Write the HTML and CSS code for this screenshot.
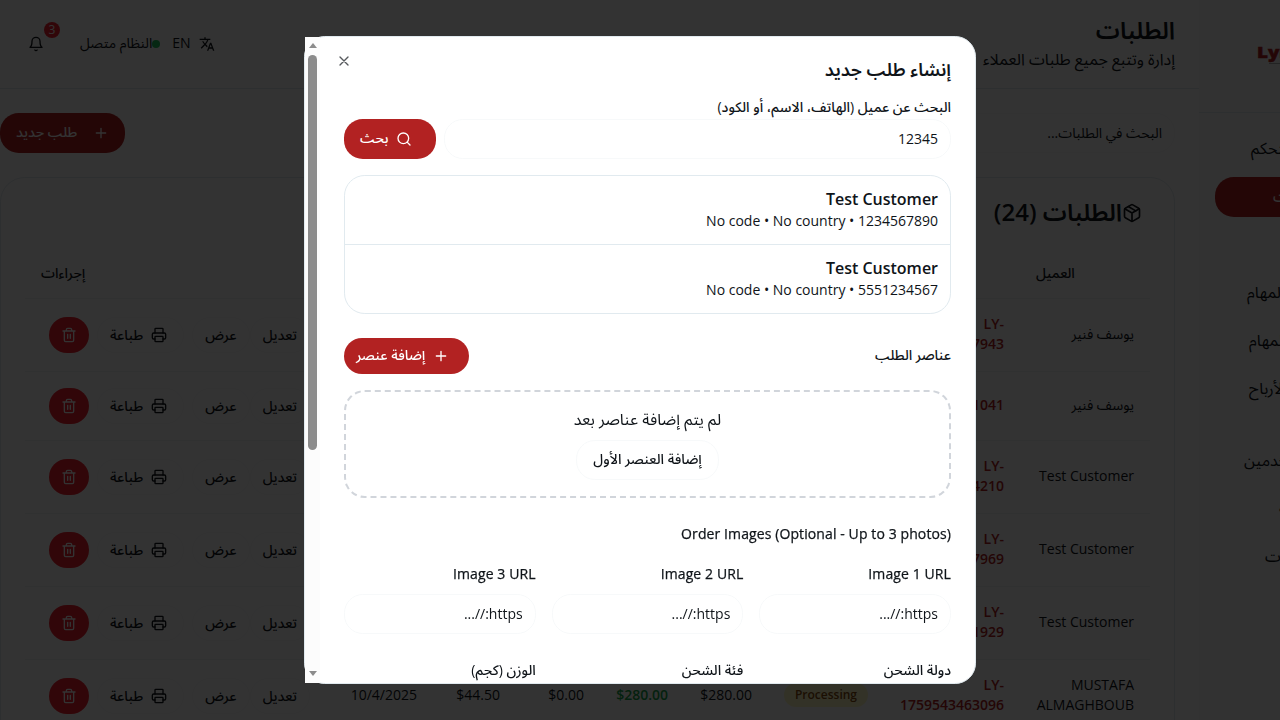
FILE: index.html
```html
<!DOCTYPE html>
<html lang="ar" dir="rtl">
<head>
<meta charset="utf-8">
<title>الطلبات</title>
<link rel="stylesheet" href="styles.css">
</head>
<body>
<svg class="defs" width="0" height="0">
  <symbol id="plus" viewBox="0 0 24 24"><path d="M5 12h14M12 5v14"/></symbol>
  <symbol id="search" viewBox="0 0 24 24"><circle cx="11" cy="11" r="8"/><path d="m21 21-4.3-4.3"/></symbol>
  <symbol id="x" viewBox="0 0 24 24"><path d="M18 6 6 18M6 6l12 12"/></symbol>
  <symbol id="bell" viewBox="0 0 24 24"><path d="M6 8a6 6 0 0 1 12 0c0 7 3 9 3 9H3s3-2 3-9"/><path d="M10.3 21a1.94 1.94 0 0 0 3.4 0"/></symbol>
  <symbol id="box" viewBox="0 0 24 24"><path d="m7.5 4.27 9 5.15"/><path d="M21 8a2 2 0 0 0-1-1.73l-7-4a2 2 0 0 0-2 0l-7 4A2 2 0 0 0 3 8v8a2 2 0 0 0 1 1.73l7 4a2 2 0 0 0 2 0l7-4A2 2 0 0 0 21 16Z"/><path d="m3.3 7 8.7 5 8.7-5M12 22V12"/></symbol>
  <symbol id="printer" viewBox="0 0 24 24"><path d="M6 18H4a2 2 0 0 1-2-2v-5a2 2 0 0 1 2-2h16a2 2 0 0 1 2 2v5a2 2 0 0 1-2 2h-2"/><path d="M6 9V3a1 1 0 0 1 1-1h10a1 1 0 0 1 1 1v6"/><rect x="6" y="14" width="12" height="8" rx="1"/></symbol>
  <symbol id="trash" viewBox="0 0 24 24"><path d="M3 6h18M19 6v14c0 1-1 2-2 2H7c-1 0-2-1-2-2V6M8 6V4c0-1 1-2 2-2h4c1 0 2 1 2 2v2M10 11v6M14 11v6"/></symbol>
  <symbol id="translate" viewBox="0 0 24 24"><path d="m12.87 15.07-2.54-2.51.03-.03A17.52 17.52 0 0 0 14.07 6H17V4h-7V2H8v2H1v1.99h11.17C11.5 7.92 10.44 9.75 9 11.35 8.07 10.32 7.3 9.19 6.69 8h-2c.73 1.63 1.73 3.17 2.98 4.56l-5.09 5.02L4 19l5-5 3.11 3.11.76-2.04zM18.5 10h-2L12 22h2l1.12-3h4.75L21 22h2l-4.5-12zm-2.62 7 1.62-4.33L19.12 17h-3.24z"/></symbol>
</svg>

<div class="app">
  <aside class="sidebar">
    <div class="brand"><span>Lynx</span><i></i></div>
    <nav class="nav">
      <a class="n0">لوحة التحكم</a>
      <a class="active">الطلبات</a>
      <a></a>
      <a class="n1">إدارة المهام</a>
      <a class="n2">المهام</a>
      <a class="n3">تقرير الأرباح</a>
      <a class="n4">المستخدمين</a>
      <a class="n5">المالية</a>
      <a class="n6">الإعدادات</a>
    </nav>
  </aside>

  <main class="main">
    <header class="top">
      <div>
        <h1>الطلبات</h1>
        <p>إدارة وتتبع جميع طلبات العملاء</p>
      </div>
      <div class="tools">
        <span class="lang"><svg class="solid"><use href="#translate"/></svg><span class="txt">EN</span></span>
        <span class="online"><i></i><span class="txt">النظام متصل</span></span>
        <span class="bell"><svg><use href="#bell"/></svg><b>3</b></span>
      </div>
    </header>
    <div class="bar">
      <div class="find">البحث في الطلبات...</div>
      <button class="btn wide"><svg><use href="#plus"/></svg><span class="txt">طلب جديد</span></button>
    </div>
    <section class="card">
      <h2><svg><use href="#box"/></svg><span class="txt">الطلبات (24)</span></h2>
      <div class="table" id="orders">
        <div class="row head"><span>العميل</span><span></span><span></span><span></span><span></span><span></span><span></span><span></span><span>إجراءات</span></div>
      </div>
    </section>
  </main>
</div>

<div class="overlay">
  <div class="dialog">
    <div class="scroll"><i class="up"></i><i class="thumb"></i><i class="down"></i></div>
    <div class="content">
      <svg class="close"><use href="#x"/></svg>
      <h3>إنشاء طلب جديد</h3>
      <label class="lb-search">البحث عن عميل (الهاتف، الاسم، أو الكود)</label>
      <div class="searchrow">
        <div class="input">12345</div>
        <button class="btn"><svg><use href="#search"/></svg><span class="txt">بحث</span></button>
      </div>
      <div class="results">
        <div><strong>Test Customer</strong><span dir="ltr">No code • No country • 1234567890</span></div>
        <div><strong>Test Customer</strong><span dir="ltr">No code • No country • 5551234567</span></div>
      </div>
      <div class="itemshead">
        <label class="txt">عناصر الطلب</label>
        <button class="btn small"><svg><use href="#plus"/></svg><span class="txt">إضافة عنصر</span></button>
      </div>
      <div class="empty">
        <p>لم يتم إضافة عناصر بعد</p>
        <button class="outline">إضافة العنصر الأول</button>
      </div>
      <label class="lb-images latin" dir="ltr">Order Images (Optional - Up to 3 photos)</label>
      <div class="three">
        <div><label class="latin">Image 1 URL</label><div class="input">https://...</div></div>
        <div><label class="latin">Image 2 URL</label><div class="input">https://...</div></div>
        <div><label class="latin">Image 3 URL</label><div class="input">https://...</div></div>
      </div>
      <div class="three ship">
        <label>دولة الشحن</label><label>فئة الشحن</label><label>الوزن (كجم)</label>
      </div>
    </div>
  </div>
</div>
<script src="orders.js"></script>
</body>
</html>
```

FILE: styles.css
```css
* { box-sizing: border-box; margin: 0; padding: 0; }
html { overflow: hidden; }
body { width: 1280px; height: 720px; overflow: hidden; background: #fff; color: #0f1419; font-family: "Open Sans", "Noto Sans Arabic", sans-serif; font-size: 16px; line-height: 24px; }
svg { width: 16px; height: 16px; fill: none; stroke: currentColor; stroke-width: 2; stroke-linecap: round; stroke-linejoin: round; flex: none; }
svg.defs { position: absolute; width: 0; height: 0; }
svg.solid { fill: currentColor; stroke: none; }
button { font: inherit; border: 0; }
label { display: block; font-size: 14px; font-weight: 500; line-height: 14px; }
.latin { letter-spacing: .1px; -webkit-text-stroke: .25px currentColor; }
.txt { padding-bottom: 2px; }

.app { display: flex; direction: ltr; height: 720px; overflow: hidden; }
.app > * { direction: rtl; }
.main { order: 1; width: 1199px; height: 720px; overflow: hidden; flex: none; }
.sidebar { order: 2; width: 256px; flex: none; background: #f9fafa; }
.brand { height: 113px; border-bottom: 1px solid #e1eaef; direction: ltr; padding: 40px 0 0 58px; color: #b22222; font-weight: 800; font-size: 15px; line-height: 24px; }
.brand span { display: block; width: 60px; transform: scaleX(1.25); transform-origin: 0 0; -webkit-text-stroke: .5px currentColor; }
.brand i { display: block; width: 40px; height: 1px; margin: -1px 0 0 12px; background: #b0b0b0; }
.nav { padding: 16px; display: grid; grid-auto-rows: 40px; row-gap: 8px; }
.nav a { display: flex; justify-content: flex-end; align-items: center; height: 40px; padding-bottom: 2px; white-space: nowrap; }
.nav .active { background: #b22222; color: #fff; border-radius: 18.8px; padding-inline-end: 58px; }
.nav .n0 { padding-inline-end: 36px; }
.nav .n1 { padding-inline-end: 32px; }
.nav .n2 { padding-inline-end: 34px; }
.nav .n3 { padding-inline-end: 34px; }
.nav .n4 { padding-inline-end: 29px; margin-top: 24px; }
.nav .n5 { padding-inline-end: 64px; margin-top: 24px; }
.nav .n6 { padding-inline-end: 50px; margin-top: 24px; }

.top { height: 89px; border-bottom: 1px solid #e1eaef; padding: 14px 24px 0 28px; display: flex; justify-content: space-between; }
.top h1 { font-size: 24px; line-height: 32px; font-weight: 600; }
.top p { line-height: 26px; }
.tools { display: flex; align-items: center; height: 60px; font-size: 14px; direction: ltr; }
.tools > span { display: flex; align-items: center; }
.bell { order: 1; position: relative; width: 52px; }
.bell b { position: absolute; left: 16px; top: -14px; width: 16px; height: 16px; border-radius: 50%; background: #f4212e; color: #fff; font-size: 12px; line-height: 15px; font-weight: 400; text-align: center; }
.online { order: 2; direction: rtl; }
.online i { width: 8px; height: 8px; border-radius: 50%; background: #22c55e; }
.lang { order: 3; direction: rtl; gap: 8px; margin-left: 12px; }

.bar { padding: 24px 24px 0 0; display: flex; justify-content: space-between; }
.find { width: 384px; height: 40px; border: 1px solid #f7f9fa; border-radius: 18.8px; padding: 0 12px; font-size: 14px; line-height: 38px; }
.btn { background: #b22222; color: #fff; height: 40px; border-radius: 18.8px; padding: 0 16px; display: flex; align-items: center; gap: 8px; font-size: 14px; font-weight: 500; white-space: nowrap; }
.btn svg { margin-right: 8px; }
.btn.wide { gap: 16px; }
.btn.wide svg { margin-right: 0; }
.btn.small { height: 36px; padding: 0 12px; }

.card { width: 1175px; height: 900px; margin-top: 24px; margin-inline-start: 24px; border: 1px solid #e1eaef; border-radius: 24.8px; padding: 19px 24px; }
.card h2 { display: flex; align-items: center; height: 32px; font-size: 24px; font-weight: 600; padding-right: 8px; }
.card h2 svg { width: 20px; height: 20px; }
.row { display: grid; grid-template-columns: 130px 136px 116px 84px 84px 84px 83px 91px 1fr; min-height: 69px; align-items: center; border-bottom: 1px solid #eef2f5; font-size: 14px; line-height: 20px; }
.row > * { padding: 15px 16px 17px; }
.row.head { min-height: 0; height: 50px; margin-top: 20px; font-weight: 500; }
.row.head span { text-align: left; padding: 13px 16px 15px; }
.num { color: #b22222; font-weight: 600; }
.green { color: #16a34a; font-weight: 600; }
.pill { display: inline-block; background: #fef9c3; color: #854d0e; font-size: 12px; font-weight: 600; line-height: 16px; padding: 4px 11px; border-radius: 18.8px; }
.row > .acts { display: flex; justify-content: flex-end; padding: 15px 16px; }
.acts > span { height: 36px; padding: 0 12px 1px; border: 1px solid #f7f9fa; border-radius: 18.8px; display: flex; align-items: center; gap: 8px; font-weight: 500; white-space: nowrap; }
.acts > span + span { margin-left: 8px; }
.acts svg { margin-top: 1px; }
.acts .pr svg { margin-right: 4px; }
.acts .del { width: 40px; background: #f4212e; color: #fff; border: 0; justify-content: center; }

.overlay { position: fixed; inset: 0; background: rgba(0,0,0,.8); display: grid; place-items: center; }
.dialog { width: 672px; height: 648px; border: 1px solid #e1eaef; border-radius: 20.8px; background: #fff; display: flex; flex-direction: row-reverse; }
.scroll { width: 15px; height: 646px; background: #fcfcfc; display: flex; flex-direction: column; align-items: center; flex: none; }
.scroll .up { border: 4.5px solid transparent; border-top: 0; border-bottom: 5px solid #8b8b8b; margin-top: 6px; }
.scroll .thumb { width: 9px; height: 395px; margin-top: 7px; border-radius: 5px; background: #8b8b8b; }
.scroll .down { border: 4.5px solid transparent; border-bottom: 0; border-top: 5px solid #8b8b8b; margin-top: auto; margin-bottom: 7px; }
.content { flex: 1; height: 646px; padding: 23px 24px; position: relative; overflow: hidden; border-radius: 0 20px 20px 0; }
.close { position: absolute; left: 16px; top: 16px; opacity: .7; }
h3 { font-size: 18px; line-height: 18px; font-weight: 600; }
.lb-search { margin-top: 22px; }
.searchrow { display: flex; gap: 8px; margin-top: 5px; }
.input { flex: 1; height: 40px; border: 1px solid #f7f9fa; border-radius: 18.8px; padding: 0 12px; font-size: 14px; line-height: 38px; }
.results { margin-top: 16px; border: 1px solid #e1eaef; border-radius: 20.8px; }
.results div { padding: 11px 12px 13px; display: flex; flex-direction: column; align-items: flex-start; }
.results div + div { border-top: 1px solid #e1eaef; }
.results strong { font-weight: 600; }
.results span { font-size: 14px; line-height: 20px; }
.itemshead { display: flex; justify-content: space-between; align-items: center; margin-top: 24px; }
.empty { margin-top: 16px; border: 2px dashed #d1d5db; border-radius: 20.8px; padding: 15px 16px 16px; text-align: center; }
.outline { margin-top: 9px; height: 40px; padding: 0 16px 2px; border: 1px solid #f7f9fa; border-radius: 18.8px; background: #fff; color: inherit; font-size: 14px; font-weight: 500; vertical-align: top; }
.lb-images { margin-top: 29px; text-align: right; }
.three { display: grid; grid-template-columns: repeat(3, 1fr); gap: 16px; margin-top: 26px; }
.three .input { margin-top: 13px; }
.ship { margin-top: 29px; }
```

FILE: orders.js
```js
const orders = [
  ["يوسف فنير", "LY-<br>1759543467943"],
  ["يوسف فنير", "1759543461041"],
  ["Test Customer", "LY-<br>1759543464210"],
  ["Test Customer", "LY-<br>1759543467969"],
  ["Test Customer", "LY-<br>1759543461929"],
  ["MUSTAFA ALMAGHBOUB", "LY-<br>1759543463096"]
];
const table = document.getElementById("orders");
orders.forEach(([name, number]) => {
  const row = document.createElement("div");
  row.className = "row";
  row.innerHTML = `<div>${name}</div><div class="num"><bdo dir="ltr">${number}</bdo></div>
    <div><b class="pill">Processing</b></div><div>$280.00</div><div class="green">$280.00</div>
    <div>$0.00</div><div>$44.50</div><div>10/4/2025</div>
    <div class="acts"><span>تعديل</span><span class="v">عرض</span><span class="pr"><svg><use href="#printer"/></svg>طباعة</span><span class="del"><svg><use href="#trash"/></svg></span></div>`;
  table.append(row);
});
```
